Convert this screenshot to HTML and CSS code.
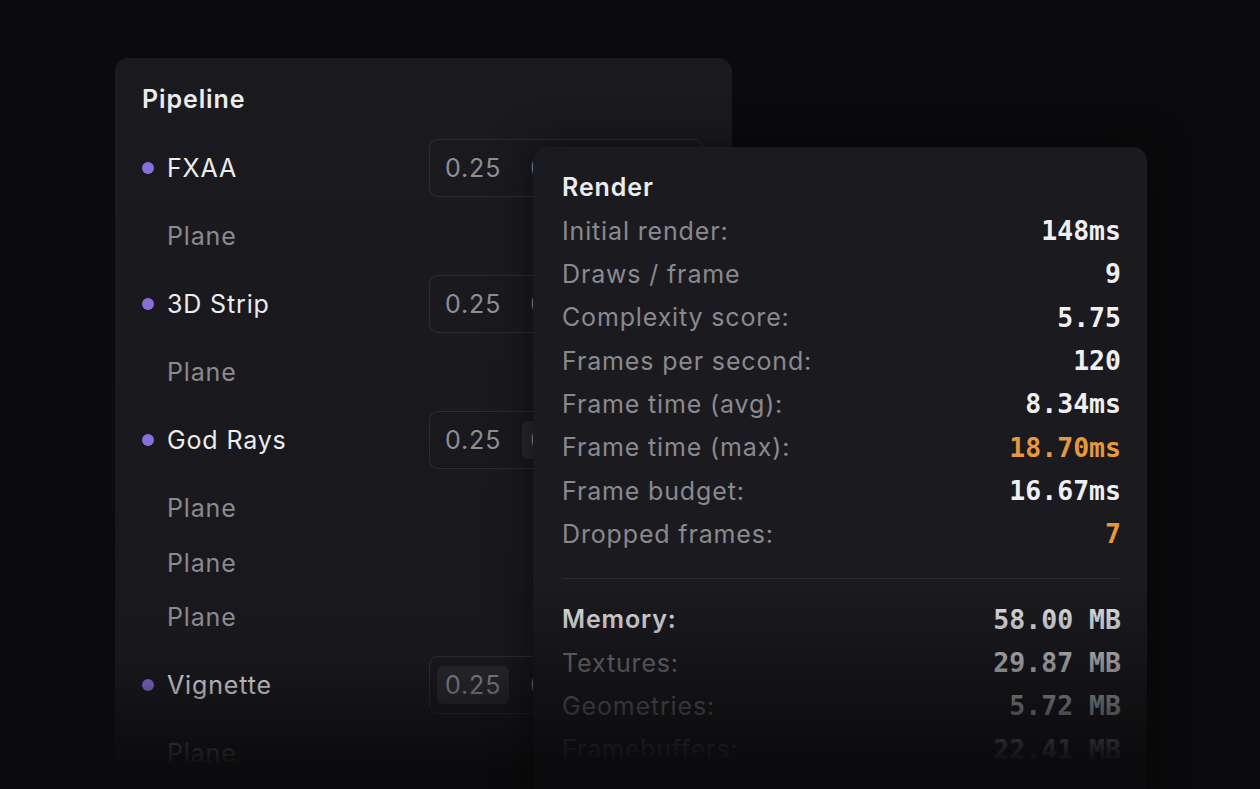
FILE: index.html
```html
<!DOCTYPE html>
<html lang="en">
<head>
<meta charset="utf-8">
<title>Pipeline / Render</title>
<link rel="stylesheet" href="styles.css">
</head>
<body>
<div class="stage">
  <section class="panel pipeline">
    <h2 class="title">Pipeline</h2>
    <div class="list">
      <div class="row main">
        <span class="name"><i class="dot"></i>FXAA</span>
        <div class="field"><span class="chip">0.25</span><span class="chip">0.25</span><span class="chip">0.25</span></div>
      </div>
      <div class="row sub">Plane</div>
      <div class="row main">
        <span class="name"><i class="dot"></i>3D Strip</span>
        <div class="field"><span class="chip">0.25</span><span class="chip">0.25</span><span class="chip">0.25</span></div>
      </div>
      <div class="row sub">Plane</div>
      <div class="row main">
        <span class="name"><i class="dot"></i>God Rays</span>
        <div class="field"><span class="chip">0.25</span><span class="chip active">0.25</span><span class="chip">0.25</span></div>
      </div>
      <div class="row sub">Plane</div>
      <div class="row sub">Plane</div>
      <div class="row sub">Plane</div>
      <div class="row main">
        <span class="name"><i class="dot"></i>Vignette</span>
        <div class="field"><span class="chip active">0.25</span><span class="chip">0.25</span><span class="chip">0.25</span></div>
      </div>
      <div class="row sub">Plane</div>
    </div>
  </section>

  <section class="panel render">
    <h2 class="title">Render</h2>
    <div class="stats">
      <div class="stat"><span class="label">Initial render:</span><span class="value">148ms</span></div>
      <div class="stat"><span class="label">Draws / frame</span><span class="value">9</span></div>
      <div class="stat"><span class="label">Complexity score:</span><span class="value">5.75</span></div>
      <div class="stat"><span class="label">Frames per second:</span><span class="value">120</span></div>
      <div class="stat"><span class="label">Frame time (avg):</span><span class="value">8.34ms</span></div>
      <div class="stat"><span class="label">Frame time (max):</span><span class="value warn">18.70ms</span></div>
      <div class="stat"><span class="label">Frame budget:</span><span class="value">16.67ms</span></div>
      <div class="stat"><span class="label">Dropped frames:</span><span class="value warn">7</span></div>
    </div>
    <hr class="divider">
    <div class="stats">
      <div class="stat strong"><span class="label">Memory:</span><span class="value">58.00 MB</span></div>
      <div class="stat"><span class="label">Textures:</span><span class="value">29.87 MB</span></div>
      <div class="stat"><span class="label">Geometries:</span><span class="value">5.72 MB</span></div>
      <div class="stat"><span class="label">Framebuffers:</span><span class="value">22.41 MB</span></div>
    </div>
  </section>
</div>
</body>
</html>
```

FILE: styles.css
```css
* { box-sizing: border-box; }

html, body {
  margin: 0;
  padding: 0;
  height: 789px;
  overflow: hidden;
  background: #0b0b0d;
  font-family: Inter, "Noto Sans", "Liberation Sans", sans-serif;
  color: #ececee;
}

.stage {
  display: grid;
  width: 1260px;
  height: 789px;
  overflow: hidden;
}

.panel {
  grid-area: 1 / 1;
  align-self: start;
  position: relative;
  border-radius: 14px;
}

.panel::after {
  content: "";
  position: absolute;
  inset: 0;
  border-radius: inherit;
  pointer-events: none;
}

.pipeline {
  margin: 58px 0 0 115px;
  width: 617px;
  height: 760px;
  padding: 23px 0 0 27px;
  background: linear-gradient(180deg, #1b1a1f 0%, #18171c 100%);
}

.pipeline::after {
  background: linear-gradient(180deg,
    rgba(11, 11, 13, 0) 0,
    rgba(11, 11, 13, 0) 592px,
    rgba(11, 11, 13, 1) 712px);
}

.render {
  margin: 147px 0 0 533px;
  width: 614px;
  height: 680px;
  padding: 18px 26px 0 29px;
  background: #1b1a1f;
  box-shadow: 0 0 40px rgba(0, 0, 0, 0.55);
}

.render::after {
  background: linear-gradient(180deg,
    rgba(11, 11, 13, 0) 0,
    rgba(11, 11, 13, 0) 440px,
    rgba(11, 11, 13, 1) 616px);
}

.title {
  margin: 0;
  font-size: 25px;
  font-weight: 600;
  line-height: 36px;
  color: #ececee;
  letter-spacing: 0.9px;
}

.render .title { line-height: 44px; }

.list {
  margin-top: 10.5px;
  display: flex;
  flex-direction: column;
}

.row {
  font-size: 25px;
  letter-spacing: 0.85px;
  display: flex;
  align-items: center;
}

.row.main {
  height: 81.5px;
  color: #ececee;
}

.row.sub {
  height: 54.5px;
  padding-left: 25px;
  color: #8a898f;
}

.name {
  flex: 0 0 287px;
  display: flex;
  align-items: center;
}

.dot {
  width: 12px;
  height: 12px;
  border-radius: 50%;
  background: #8b6fd8;
  margin-right: 13px;
  flex: none;
}

.field {
  width: 274px;
  height: 58px;
  border: 1px solid #2e2d33;
  border-radius: 9px;
  display: flex;
  align-items: center;
  gap: 13px;
  padding: 0 7px;
  overflow: hidden;
  flex: none;
}

.chip {
  height: 38px;
  line-height: 38px;
  padding: 0 8px;
  border-radius: 6px;
  color: #8f8e94;
  flex: none;
}

.chip.active { background: #29282d; }

.stats {
  display: flex;
  flex-direction: column;
}

.stat {
  height: 43.33px;
  display: flex;
  align-items: center;
  justify-content: space-between;
}

.label {
  font-size: 25px;
  letter-spacing: 0.85px;
  color: #8a898f;
}

.value {
  font-family: "DejaVu Sans Mono", "Liberation Mono", monospace;
  font-weight: 700;
  font-size: 26.5px;
  color: #efeff1;
}

.value.warn { color: #e5983d; }

.stat.strong .label {
  color: #ececee;
  font-weight: 600;
}

.divider {
  margin: 22px 0 19px;
  border: 0;
  height: 1px;
  background: #2c2b31;
}
```
